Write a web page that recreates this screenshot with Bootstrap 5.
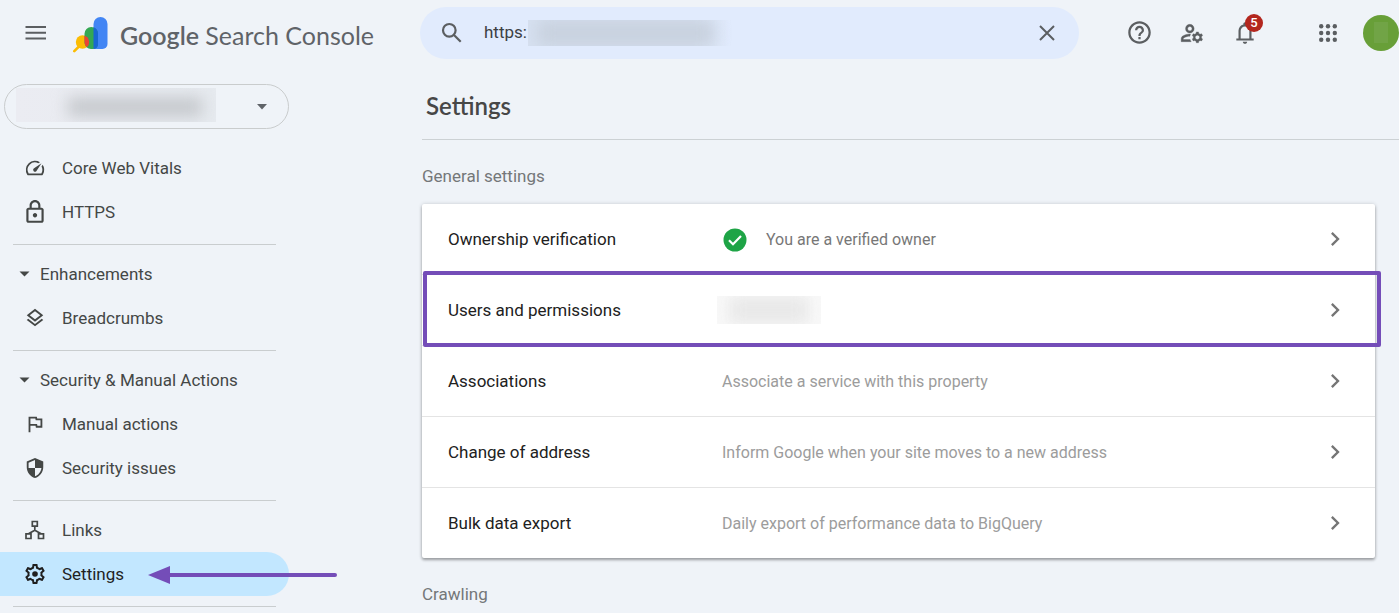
<!DOCTYPE html>
<html lang="en">
<head>
<meta charset="utf-8">
<meta name="viewport" content="width=device-width, initial-scale=1">
<title>Settings - Google Search Console</title>
<link href="https://cdn.jsdelivr.net/npm/bootstrap@5.3.0/dist/css/bootstrap.min.css" rel="stylesheet">
<style>
  body { background: #eff3f8; font-family: Roboto, "Liberation Sans", sans-serif; font-size: 16px; line-height: 24px; color: #1f1f1f; overflow-x: hidden; }
  svg { display: block; flex: none; fill: currentColor; }
  a { color: inherit; text-decoration: none; }
  .topbar { height: 65px; color: #5b5e61; }
  .brand-area { flex: 0 0 420px; padding-left: 24px; }
  .menu-btn svg { width: 24px; }
  .brand-link { margin-left: 24px; padding-top: 4px; }
  .brand-name { font-family: Lato, sans-serif; font-size: 25px; line-height: 32px; color: #5f6368; }
  .brand-name span { font-weight: 600; }
  .search-pill { height: 52px; background: #e1ebfd; padding: 0 20px; }
  .search-pill .form-control { font-size: 17px; color: #3c4043; width: 64px; flex: none; margin-left: 20px; }
  .icon-btn { width: 36px; height: 36px; color: inherit; border: 0; background: none; padding: 0; display: flex; align-items: center; justify-content: center; position: relative; flex: none; }
  .icon-btn.narrow { width: 24px; }
  .tools { margin-left: 42px; gap: 17px; }
  .apps { margin-left: 30px; }
  .alert-count { position: absolute; top: -1px; right: 0; width: 18px; height: 18px; border-radius: 9px; background: #b3261e; color: #fff; font-size: 13px; line-height: 18px; font-weight: 500; }
  .avatar { background: #689f38; border-radius: 50%; }
  .avatar span { width: 14px; height: 21px; background: #71a446; }
  .smudge { display: block; overflow: hidden; flex: none; }
  .smudge::before { content: ""; display: block; height: 100%; filter: blur(8px); }
  .smudge-url { width: 204px; height: 26px; margin-left: -20px; background: linear-gradient(90deg, #d6e0f0 80%, #e1ebfd); }
  .smudge-url::before { background: #c8d1de; margin: 0 18px 0 10px; }
  .smudge-site { width: 200px; height: 34px; margin: -4px 0 0 11px; background: linear-gradient(90deg, #ebecf2, #e6eaef); }
  .smudge-site::before { background: #c3c6ca; margin: 10px 14px 0 52px; height: 18px; }
  .smudge-user { width: 104px; height: 28px; margin-left: -5px; background: #f9f9f9; }
  .smudge-user::before { background: #e8e8e8; margin: 0 12px; }
  .side-area { flex: 0 0 422px; font-size: 17px; color: #444746; }
  .side-area > div { width: 289px; }
  .site-picker { height: 45px; margin: 19px 0 17px 4px; width: 285px; border: 1px solid #c9cccd; background: none; padding: 0 20px 0 0; color: #5f6368; }
  .side-link { height: 44px; padding-left: 23px; gap: 15px; }
  .side-link svg { width: 24px; overflow: visible; }
  .side-link.group-head { padding-left: 17px; gap: 8px; }
  .side-link.group-head svg { width: 15px; }
  .side-link.current { background: #c2e7ff; border-radius: 0 22px 22px 0; color: #1f1f1f; position: relative; }
  .side-rule { margin: 10px 13px 7px; border-top: 1px solid #c9cdcf; opacity: 1; }
  .side-link .pointer-arrow { position: absolute; left: 148px; top: 13px; width: 189px; color: #744db8; }
  .line-icon { fill: none; stroke: currentColor; }
  .page-title { font-family: Lato, sans-serif; font-size: 24px; line-height: 32px; font-weight: 600; color: #474747; padding: 25px 4px 17px; margin: 0; border-bottom: 1px solid #ccd1d4; }
  .section-name { font-size: 17px; line-height: 24px; font-weight: 400; color: #747779; margin: 0; }
  .settings-card { margin: 16px 24px 24px 0; border: 0; border-radius: 2px; box-shadow: 0 2px 3px rgba(0,0,0,.32), 0 0 4px rgba(0,0,0,.14); background: #fff; }
  .setting { height: 71px; padding: 0 26px; border-bottom: 1px solid #e4e4e4; font-size: 17px; position: relative; }
  .setting:last-child { border: 0; height: 70px; }
  .setting-name { flex: 0 0 274px; color: #212121; }
  .setting-note { font-size: 16px; padding-top: 2px; color: #9c9c9c; }
  .setting-note.live { color: #777; gap: 18px; }
  .setting > svg { color: #757575; }
  .marked-box { position: absolute; top: -4px; right: -6px; bottom: -2px; left: 1px; border: 4px solid #744db8; border-radius: 2px; pointer-events: none; z-index: 2; }
</style>
</head>
<body>
<header class="topbar d-flex align-items-center">
  <div class="brand-area d-flex align-items-center">
    <button class="icon-btn narrow menu-btn" type="button" aria-label="Main menu"><svg height="14" viewBox="0 0 24 14"><path d="M1.500 0H22v2H1.500zM1.500 5.800H22v2H1.500zM1.500 11.500H22v2H1.500z"/></svg></button>
    <a class="brand-link d-flex align-items-center" href="#">
      <svg width="36" height="36" viewBox="0 0 36 36" aria-hidden="true">
        <defs><clipPath id="greenShape"><rect x="12.500" y="10" width="13.500" height="22" rx="6.700"/><rect x="15" y="22" width="11" height="10"/></clipPath></defs>
        <path d="M9 27.500 2.300 34.200" stroke="#fbbc04" stroke-width="2.600" stroke-linecap="round"/>
        <circle cx="10.500" cy="25" r="6.700" fill="#fbbc04"/>
        <path d="M21.500 7a7 7 0 0 1 14 0v20a5 5 0 0 1-5 5h-9z" fill="#4285f4"/>
        <path d="M12.500 16.700a6.750 6.750 0 0 1 13.500 0V27a5 5 0 0 1-5 5h-2a6.500 6.500 0 0 1-6.500-6z" fill="#34a853"/>
        <path d="M21.500 10.300a6.700 6.700 0 0 1 4.500 6.400V27a5 5 0 0 1-4.500 5z" fill="#1967d2"/>
        <circle cx="10.500" cy="25" r="6.700" fill="#ea4335" clip-path="url(#greenShape)"/>
      </svg>
      <span class="brand-name ms-2 ps-1 text-nowrap"><span>Google</span> Search Console</span>
    </a>
  </div>
  <form class="search-pill rounded-pill d-flex align-items-center flex-grow-1" role="search">
    <svg class="line-icon" width="24" height="24" viewBox="0 0 24 24" stroke-width="2.200"><circle cx="9.300" cy="9.300" r="6.300"/><path d="m14 14 6.700 6.700"/></svg>
    <input class="form-control border-0 bg-transparent shadow-none p-0" type="text" value="https:" aria-label="Inspect any URL">
    <span class="smudge smudge-url"></span>
    <button class="icon-btn narrow ms-auto" type="button" aria-label="Clear search"><svg width="18" height="18" viewBox="0 0 18 18" stroke="currentColor" stroke-width="2"><path d="m2 2 14 14M16 2 2 16"/></svg></button>
  </form>
  <div class="tools d-flex align-items-center">
    <button class="icon-btn" type="button" aria-label="Help"><svg width="27" height="27" viewBox="0 0 24 24"><path d="M11 18h2v-2h-2v2zm1-16C6.480 2 2 6.480 2 12s4.480 10 10 10 10-4.480 10-10S17.520 2 12 2zm0 18c-4.410 0-8-3.590-8-8s3.590-8 8-8 8 3.590 8 8-3.590 8-8 8zm0-14c-2.210 0-4 1.790-4 4h2c0-1.100.9-2 2-2s2 .9 2 2c0 2-3 1.750-3 5h2c0-2.250 3-2.500 3-5 0-2.210-1.790-4-4-4z"/></svg></button>
    <button class="icon-btn" type="button" aria-label="User settings"><svg width="26" height="26" viewBox="0 0 24 24"><path stroke="currentColor" stroke-width=".3" d="M4,18v-0.650c0-0.340,0.160-0.660,0.410-0.810C6.100,15.530,8.030,15,10,15c0.030,0,0.050,0,0.080,0.010c0.100-0.700,0.300-1.370,0.590-1.980C10.450,13.010,10.230,13,10,13c-2.420,0-4.680,0.670-6.610,1.820C2.510,15.340,2,16.320,2,17.350V20h9.260c-0.420-0.600-0.750-1.280-0.970-2H4z M10,12c2.210,0,4-1.790,4-4s-1.790-4-4-4C7.790,4,6,5.790,6,8S7.790,12,10,12z M10,6c1.100,0,2,0.900,2,2s-0.900,2-2,2c-1.100,0-2-0.900-2-2S8.900,6,10,6z M20.750,16c0-0.220-0.030-0.420-0.060-0.630l1.140-1.010l-1-1.730l-1.450,0.490c-0.320-0.270-0.680-0.480-1.080-0.630L18,11h-2l-0.300,1.490c-0.400,0.150-0.760,0.360-1.080,0.630l-1.450-0.490l-1,1.730l1.140,1.010c-0.030,0.210-0.060,0.410-0.060,0.630s0.030,0.420,0.060,0.630l-1.140,1.010l1,1.730l1.450-0.490c0.320,0.270,0.680,0.480,1.080,0.630L16,21h2l0.300-1.490c0.400-0.150,0.760-0.360,1.080-0.630l1.450,0.490l1-1.730l-1.140-1.010C20.720,16.420,20.750,16.220,20.750,16z M17,18c-1.100,0-2-0.900-2-2s0.900-2,2-2s2,0.900,2,2S18.100,18,17,18z"/></svg></button>
    <button class="icon-btn" type="button" aria-label="Notifications"><svg width="26" height="26" viewBox="0 0 24 24"><path d="M4 19v-2h2v-7c0-1.380.42-2.610 1.250-3.690C8.080 5.240 9.170 4.530 10.500 4.200V3.500c0-.83.67-1.500 1.500-1.500s1.500.67 1.500 1.500v.7c1.330.33 2.420 1.040 3.250 2.110C17.580 7.390 18 8.620 18 10v7h2v2H4zm8 3c-1.100 0-2-.9-2-2h4c0 1.100-.9 2-2 2zM8 17h8v-7c0-1.100-.39-2.040-1.170-2.830A3.860 3.860 0 0 0 12 6c-1.100 0-2.040.39-2.830 1.170A3.860 3.860 0 0 0 8 10v7z"/></svg><span class="alert-count">5</span></button>
    <button class="icon-btn apps" type="button" aria-label="Google apps"><svg width="18" height="18" viewBox="0 0 18 18"><circle cx="2.200" cy="2.200" r="2.200"/><circle cx="9" cy="2.200" r="2.200"/><circle cx="15.800" cy="2.200" r="2.200"/><circle cx="2.200" cy="9" r="2.200"/><circle cx="9" cy="9" r="2.200"/><circle cx="15.800" cy="9" r="2.200"/><circle cx="2.200" cy="15.800" r="2.200"/><circle cx="9" cy="15.800" r="2.200"/><circle cx="15.800" cy="15.800" r="2.200"/></svg></button>
    <button class="icon-btn avatar" type="button" aria-label="Google account"><span></span></button>
  </div>
</header>

<div class="d-flex">
  <aside class="side-area">
    <div>
      <button class="site-picker rounded-pill d-flex align-items-center justify-content-between" type="button" aria-label="Select property">
        <span class="smudge smudge-site"></span>
        <svg width="12" height="6" viewBox="0 0 12 6"><path d="M1 0h10L6 5.500z"/></svg>
      </button>
      <nav class="nav flex-column flex-nowrap" aria-label="Search Console">
        <a class="side-link d-flex align-items-center" href="#"><svg height="22" viewBox="0 0 24 24"><path d="M20.380 8.570l-1.230 1.850a8 8 0 0 1-.22 7.580H5.070A8 8 0 0 1 15.580 6.850l1.850-1.230A10 10 0 0 0 3.350 19a2 2 0 0 0 1.720 1h13.850a2 2 0 0 0 1.740-1 10 10 0 0 0-.27-10.440zm-9.790 6.840a2 2 0 0 0 2.830 0l5.660-8.490-8.490 5.660a2 2 0 0 0 0 2.830z"/></svg>Core Web Vitals</a>
        <a class="side-link d-flex align-items-center" href="#"><svg height="26" viewBox="1 0 22 24"><path d="M18 8h-1V6c0-2.760-2.240-5-5-5S7 3.240 7 6v2H6c-1.100 0-2 .9-2 2v10c0 1.100.9 2 2 2h12c1.100 0 2-.9 2-2V10c0-1.100-.9-2-2-2zM9 6c0-1.660 1.340-3 3-3s3 1.340 3 3v2H9V6zm9 14H6V10h12v10zm-6-3c1.100 0 2-.9 2-2s-.9-2-2-2-2 .9-2 2 .9 2 2 2z"/></svg>HTTPS</a>
        <hr class="side-rule">
        <a class="side-link group-head d-flex align-items-center" href="#"><svg height="6" viewBox="0 0 15 6"><path d="M2.500.5h10l-5 5z"/></svg>Enhancements</a>
        <a class="side-link d-flex align-items-center" href="#"><svg height="22" viewBox="0 0 24 24"><path d="M11.990 18.540l-7.370-5.730L3 14.070l9 7 9-7-1.630-1.270zM12 16l7.360-5.730L21 9l-9-7-9 7 1.630 1.270L12 16zm0-11.470L17.740 9 12 13.470 6.260 9 12 4.530z"/></svg>Breadcrumbs</a>
        <hr class="side-rule">
        <a class="side-link group-head d-flex align-items-center" href="#"><svg height="6" viewBox="0 0 15 6"><path d="M2.500.5h10l-5 5z"/></svg>Security &amp; Manual Actions</a>
        <a class="side-link d-flex align-items-center" href="#"><svg height="22" viewBox="0 0 24 24"><path d="M12.360 6l.4 2H18v6h-3.360l-.4-2H7V6h5.360M14 4H5v17h2v-7h5.600l.4 2h7V6h-5.600L14 4z"/></svg>Manual actions</a>
        <a class="side-link d-flex align-items-center" href="#"><svg height="22" viewBox="0 0 24 24"><path d="M12 1L3 5v6c0 5.550 3.840 10.740 9 12 5.160-1.260 9-6.450 9-12V5l-9-4zm0 10.990h7c-.53 4.120-3.280 7.790-7 8.940V12H5V6.300l7-3.110v8.800z" transform="matrix(-1 0 0 1 24 0)" opacity="0"/><path d="M12 1 3 5v6c0 5.550 3.840 10.740 9 12 5.160-1.260 9-6.450 9-12V5l-9-4zm0 11h7c-.53 4.120-3.280 7.790-7 8.940V12H5V6.300l7-3.110V12z"/></svg>Security issues</a>
        <hr class="side-rule">
        <a class="side-link d-flex align-items-center" href="#"><svg class="line-icon" height="24" viewBox="0 0 24 24" stroke-width="1.700"><path d="M9.300 3.500h5v4.700h-5zM3 15.800h5v4.700H3zM15.500 15.800h5v4.700h-5zM11.800 8v4.200M5.500 15.800l6.300-3.600 6.300 3.600"/></svg>Links</a>
        <a class="side-link current d-flex align-items-center" href="#" aria-current="page"><svg height="24" viewBox="0 0 24 24"><circle cx="12" cy="12" r="2.800"/><path d="M19.430 12.980c.04-.32.07-.64.07-.98 0-.34-.03-.66-.07-.98l2.110-1.650c.19-.15.24-.42.12-.64l-2-3.460c-.09-.16-.26-.25-.44-.25-.06 0-.12.01-.17.03l-2.490 1c-.52-.4-1.080-.73-1.690-.98l-.38-2.650C14.460 2.180 14.250 2 14 2h-4c-.25 0-.46.18-.49.42l-.38 2.650c-.61.25-1.170.59-1.690.98l-2.490-1c-.06-.02-.12-.03-.18-.03-.17 0-.34.09-.43.25l-2 3.460c-.13.22-.07.49.12.64l2.110 1.650c-.04.32-.07.65-.07.98 0 .33.03.66.07.98l-2.110 1.650c-.19.15-.24.42-.12.64l2 3.460c.09.16.26.25.44.25.06 0 .12-.01.17-.03l2.490-1c.52.4 1.080.73 1.690.98l.38 2.650c.03.24.24.42.49.42h4c.25 0 .46-.18.49-.42l.38-2.650c.61-.25 1.170-.59 1.690-.98l2.490 1c.06.02.12.03.18.03.17 0 .34-.09.43-.25l2-3.460c.12-.22.07-.49-.12-.64l-2.110-1.650zm-1.980-1.710c.04.31.05.52.05.73 0 .21-.02.43-.05.73l-.14 1.130.89.7 1.080.84-.7 1.210-1.270-.51-1.040-.42-.9.68c-.43.32-.84.56-1.250.73l-1.060.43-.16 1.130-.2 1.350h-1.400l-.19-1.350-.16-1.130-1.060-.43c-.43-.18-.83-.41-1.230-.71l-.91-.7-1.060.43-1.270.51-.7-1.210 1.080-.84.89-.7-.14-1.130c-.03-.31-.05-.54-.05-.74s.02-.43.05-.73l.14-1.130-.89-.7-1.080-.84.7-1.210 1.270.51 1.040.42.9-.68c.43-.32.84-.56 1.250-.73l1.060-.43.16-1.130.2-1.350h1.390l.19 1.350.16 1.130 1.060.43c.43.18.83.41 1.230.71l.91.7 1.060-.43 1.270-.51.7 1.210-1.070.85-.89.7.14 1.130z"/></svg>Settings<svg class="pointer-arrow" height="20" viewBox="0 0 189 20" aria-hidden="true"><path d="M0 10 22 1v18z"/><path d="M20 10h167" stroke="currentColor" stroke-width="4" stroke-linecap="round"/></svg></a>
        <hr class="side-rule mb-0">
      </nav>
    </div>
  </aside>

  <main class="flex-grow-1">
    <h1 class="page-title">Settings</h1>
    <h2 class="section-name pt-4">General settings</h2>
    <div class="settings-card">
      <a class="setting d-flex align-items-center" href="#"><span class="setting-name">Ownership verification</span><span class="setting-note live d-flex align-items-center"><svg width="26" height="24" viewBox="0 0 26 24"><circle cx="13" cy="12" r="11.500" fill="#1ea446"/><path d="m7 12.300 4 4 8-8.300" fill="none" stroke="#fff" stroke-width="2.200"/></svg>You are a verified owner</span><svg class="ms-auto" width="28" height="28" viewBox="0 0 24 24"><path d="M10 6 8.590 7.410 13.170 12l-4.580 4.590L10 18l6-6z"/></svg></a>
      <a class="setting d-flex align-items-center" href="#"><span class="setting-name">Users and permissions</span><span class="smudge smudge-user"></span><svg class="ms-auto" width="28" height="28" viewBox="0 0 24 24"><path d="M10 6 8.590 7.410 13.170 12l-4.580 4.590L10 18l6-6z"/></svg><span class="marked-box"></span></a>
      <a class="setting d-flex align-items-center" href="#"><span class="setting-name">Associations</span><span class="setting-note">Associate a service with this property</span><svg class="ms-auto" width="28" height="28" viewBox="0 0 24 24"><path d="M10 6 8.590 7.410 13.170 12l-4.580 4.590L10 18l6-6z"/></svg></a>
      <a class="setting d-flex align-items-center" href="#"><span class="setting-name">Change of address</span><span class="setting-note">Inform Google when your site moves to a new address</span><svg class="ms-auto" width="28" height="28" viewBox="0 0 24 24"><path d="M10 6 8.590 7.410 13.170 12l-4.580 4.590L10 18l6-6z"/></svg></a>
      <a class="setting d-flex align-items-center" href="#"><span class="setting-name">Bulk data export</span><span class="setting-note">Daily export of performance data to BigQuery</span><svg class="ms-auto" width="28" height="28" viewBox="0 0 24 24"><path d="M10 6 8.590 7.410 13.170 12l-4.580 4.590L10 18l6-6z"/></svg></a>
    </div>
    <h2 class="section-name">Crawling</h2>
  </main>
</div>
<script src="https://cdn.jsdelivr.net/npm/bootstrap@5.3.0/dist/js/bootstrap.bundle.min.js"></script>
</body>
</html>
